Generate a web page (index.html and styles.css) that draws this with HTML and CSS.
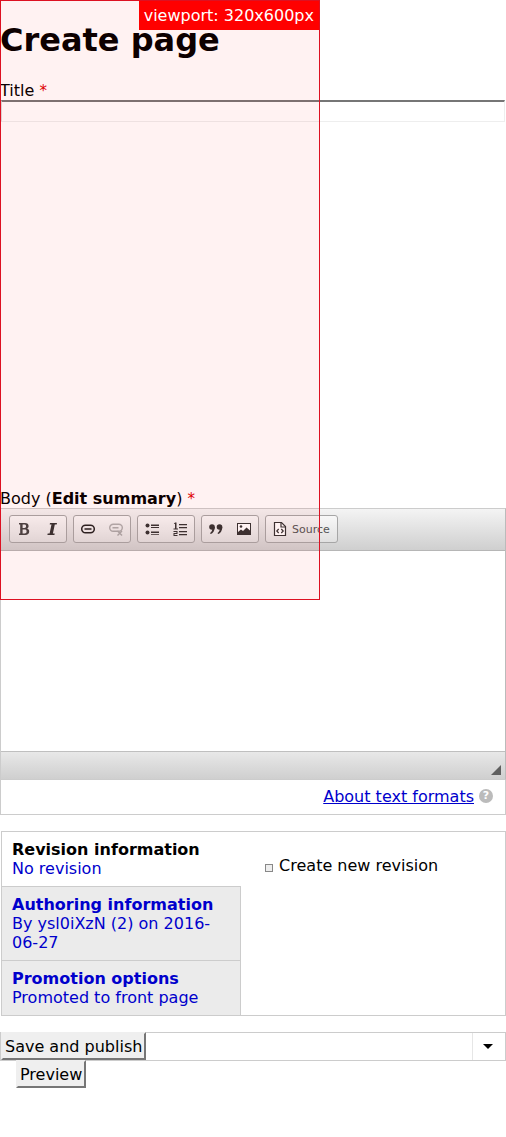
FILE: index.html
```html
<!DOCTYPE html>
<html lang="en">
<head>
  <meta charset="UTF-8">
  <title>Create page</title>
  <meta name="viewport" content="width=device-width, initial-scale=1.0">
  <link rel="stylesheet" href="styles.css">
</head>
<body>

<div class="viewport-box"><span class="viewport-label">viewport: 320x600px</span></div>

<h1>Create page</h1>

<div class="field title-field">
  <label>Title <span class="req">*</span></label>
  <div class="title-input"></div>
</div>

<div class="field">
  <label>Body (<strong>Edit summary</strong>) <span class="req">*</span></label>
  <div class="editor">
    <div class="toolbar">
      <div class="group">
        <span class="tool"><svg width="16" height="16" viewBox="0 0 16 16"><path fill="#444" d="M3 2h6c2.400 0 3.600 1.200 3.600 3 0 1.300-.7 2.200-1.800 2.600 1.500.3 2.400 1.400 2.400 2.900 0 2.200-1.500 3.500-4 3.500H3v-1.500h1.200v-9H3zM6.600 3.600v3.300h1.700c1.200 0 1.800-.6 1.800-1.700s-.6-1.600-1.800-1.600zM6.600 8.500v3.900h2c1.300 0 2-.7 2-2s-.7-1.900-2-1.900z"/></svg></span>
        <span class="tool"><svg width="16" height="16" viewBox="0 0 16 16"><path fill="#333" d="M6 2h7l-.3 1.500h-1.900L8.900 12.500h1.800L10.400 14h-7l.3-1.500h1.900l1.900-9H5.700z"/></svg></span>
      </div>
      <div class="group">
        <span class="tool"><svg width="16" height="16" viewBox="0 0 16 16"><rect x="1.700" y="4.200" width="12.600" height="7.600" rx="3.800" fill="none" stroke="#222" stroke-width="1.500"/><path stroke="#222" stroke-width="1.500" d="M4.500 8h7"/></svg></span>
        <span class="tool"><svg class="off" width="16" height="16" viewBox="0 0 16 16"><g fill="none" stroke="#333" stroke-width="1.400"><rect x="1.700" y="3.200" width="12.600" height="7" rx="3.500"/><path d="M4.500 6.700h6M9.500 10l4.500 4.500M14 10l-4.500 4.500"/></g></svg></span>
      </div>
      <div class="group">
        <span class="tool"><svg width="16" height="16" viewBox="0 0 16 16"><g fill="#333"><circle cx="3.500" cy="4.500" r="2"/><circle cx="3.500" cy="11.500" r="2"/><path d="M7 3.500h8V5H7zM7 6h8v1H7zM7 10.500h8V12H7zM7 13h8v.8H7z"/></g></svg></span>
        <span class="tool"><svg width="16" height="16" viewBox="0 0 16 16"><g fill="#333"><path d="M7 3h8v1.300H7zM7 6h8v1.300H7zM7 10h8v1.300H7zM7 13h8v1.300H7zM3 1.500h1.500v6H6v1H1.500v-1H3V3H1.800zM1.500 10h4v3h-3v1h3v1h-4v-3h3v-1h-3z"/></g></svg></span>
      </div>
      <div class="group">
        <span class="tool"><svg width="16" height="16" viewBox="0 0 16 16"><g fill="#333"><circle cx="4" cy="6" r="2.800"/><path d="M4.500 6H6.800C6.800 9.500 5 12.500 2.500 13l-.4-1C3.800 11 4.500 9 4.500 6z"/><circle cx="11.500" cy="6" r="2.800"/><path d="M12 6h2.300c0 3.500-1.800 6.500-4.300 7l-.4-1c1.700-1 2.400-3 2.400-6z"/></g></svg></span>
        <span class="tool"><svg width="16" height="16" viewBox="0 0 16 16"><rect x="1.500" y="2.500" width="13" height="11" fill="#fff" stroke="#333"/><circle cx="5" cy="5.500" r="1.300" fill="#333"/><path fill="#333" d="M2 13v-2l3-2.500 2 1.500 3.500-3.500L14 9.500V13z"/></svg></span>
      </div>
      <div class="group">
        <span class="tool source"><svg width="14" height="16" viewBox="0 0 14 16"><path fill="#fff" stroke="#333" stroke-width="1.200" d="M1.500 1.500h7l4 4v9h-11z"/><path fill="none" stroke="#333" stroke-width="1.200" d="M8 1.500V6h4.500M5.700 8L3.800 10l1.900 2M8.300 8l1.900 2-1.900 2"/></svg>Source</span>
      </div>
    </div>
    <div class="edit-area"></div>
    <div class="statusbar"><span class="resize"></span></div>
  </div>
  <div class="format-help">
    <a href="#">About text formats</a>
    <span class="help-icon">?</span>
  </div>
</div>

<div class="vtabs">
  <ul class="vtab-menu">
    <li class="vtab active"><strong>Revision information</strong><span>No revision</span></li>
    <li class="vtab"><a href="#">Authoring information</a><span>By ysl0iXzN (2) on 2016-06-27</span></li>
    <li class="vtab"><a href="#">Promotion options</a><span>Promoted to front page</span></li>
  </ul>
  <div class="vtab-pane">
    <label class="check"><input type="checkbox"> Create new revision</label>
  </div>
</div>

<div class="actions">
  <button type="button">Save and publish</button>
  <span class="split-toggle"><i class="caret"></i></span>
</div>
<button type="button" class="preview">Preview</button>

</body>
</html>
```

FILE: styles.css
```css
body {
  margin: 0;
  font-family: "DejaVu Sans", sans-serif;
  font-size: 16px;
  line-height: 19px;
  color: #000;
  background: #fff;
}

h1 {
  margin: 0;
  padding-top: 21px;
  font-size: 32px;
  line-height: 38px;
  font-weight: bold;
}

.viewport-box {
  position: absolute;
  top: 0;
  left: 0;
  width: 320px;
  height: 600px;
  box-sizing: border-box;
  border: 1px solid #dd1122;
  background: rgba(255, 0, 0, 0.05);
  z-index: 10;
}

.viewport-label {
  position: absolute;
  top: 0;
  right: 0;
  height: 29px;
  padding: 0 5px;
  background: #f00;
  color: #fff;
  line-height: 29px;
}

label {
  display: block;
}

.req {
  color: #d00;
  font-size: 15px;
  line-height: 1;
}

.title-field {
  margin-top: 22px;
  height: 408px;
}

.title-input {
  margin: 0 1px;
  height: 19px;
  border-top: 2px solid #767676;
  border-left: 1px solid #ddd;
  border-right: 1px solid #eee;
  border-bottom: 1px solid #eee;
}

.editor {
  border: 1px solid #ccc;
  border-right-color: #bbb;
}

.toolbar {
  display: flex;
  gap: 6px;
  height: 42px;
  box-sizing: border-box;
  padding: 6px 8px 0;
  border-bottom: 1px solid #b6b6b6;
  background: linear-gradient(#f4f4f4, #cfcfcf);
}

.group {
  display: flex;
  height: 28px;
  box-sizing: border-box;
  border: 1px solid #a6a6a6;
  border-radius: 3px;
  background: linear-gradient(#f8f8f8, #e0e0e0);
}

.tool {
  display: flex;
  align-items: center;
  justify-content: center;
  width: 28px;
}

.tool .off {
  opacity: 0.35;
}

.tool.source {
  width: auto;
  padding: 0 7px;
  gap: 5px;
  font-size: 11px;
  color: #555;
}

.edit-area {
  height: 200px;
}

.statusbar {
  position: relative;
  height: 27px;
  border-top: 1px solid #bfbfbf;
  background: linear-gradient(#e8e8e8, #cfcfcf);
}

.resize {
  position: absolute;
  right: 4px;
  bottom: 4px;
  border-style: solid;
  border-width: 0 0 10px 10px;
  border-color: transparent transparent #5f5f5f transparent;
}

.format-help {
  display: flex;
  justify-content: flex-end;
  align-items: center;
  gap: 5px;
  height: 32px;
  padding: 0 12px 2px 0;
  border: 1px solid #ccc;
  border-top: 0;
}

.format-help a {
  color: #0000cc;
}

.help-icon {
  width: 14px;
  height: 14px;
  border-radius: 50%;
  background: #bbb;
  color: #fff;
  font-size: 11px;
  font-weight: bold;
  line-height: 14px;
  text-align: center;
}

.vtabs {
  display: flex;
  margin: 16px 0 16px 1px;
  height: 185px;
  box-sizing: border-box;
  border: 1px solid #ccc;
}

.vtab-menu {
  list-style: none;
  margin: 0;
  padding: 0;
  width: 239px;
  box-sizing: border-box;
  border-right: 1px solid #ccc;
  background: #ebebeb;
}

.vtab {
  padding: 8px 10px;
  border-top: 1px solid #ccc;
  color: #0000cc;
}

.vtab span {
  display: block;
}

.vtab a {
  font-weight: bold;
  color: #0000cc;
  text-decoration: none;
}

.vtab.active {
  margin-right: -1px;
  border-top: 0;
  background: #fff;
}

.vtab.active strong {
  color: #000;
}

.vtab-pane {
  padding: 24px 0 0 24px;
}

.check input {
  appearance: none;
  width: 8px;
  height: 8px;
  margin: 0 1px 0 0;
  border: 1px solid #888;
  background: #eee;
  vertical-align: -1px;
}

.actions {
  display: flex;
  justify-content: space-between;
  height: 29px;
  box-sizing: border-box;
  border: 1px solid #ccc;
}

button {
  font-family: inherit;
  font-size: 16px;
  line-height: 19px;
  color: #000;
  height: 28px;
  padding: 1px 2px;
  background: #efefef;
  border: 2px solid;
  border-color: #efefef #767676 #767676 #efefef;
}

.actions button {
  margin: -1px 0 0 0;
}

.split-toggle {
  display: flex;
  align-items: center;
  justify-content: center;
  width: 30px;
  padding-right: 2px;
  border-left: 1px solid #e6e6e6;
}

.caret {
  border-style: solid;
  border-width: 5px 5px 0 5px;
  border-color: #000 transparent transparent transparent;
}

.preview {
  display: block;
  margin: -1px 0 0 16px;
}
```
